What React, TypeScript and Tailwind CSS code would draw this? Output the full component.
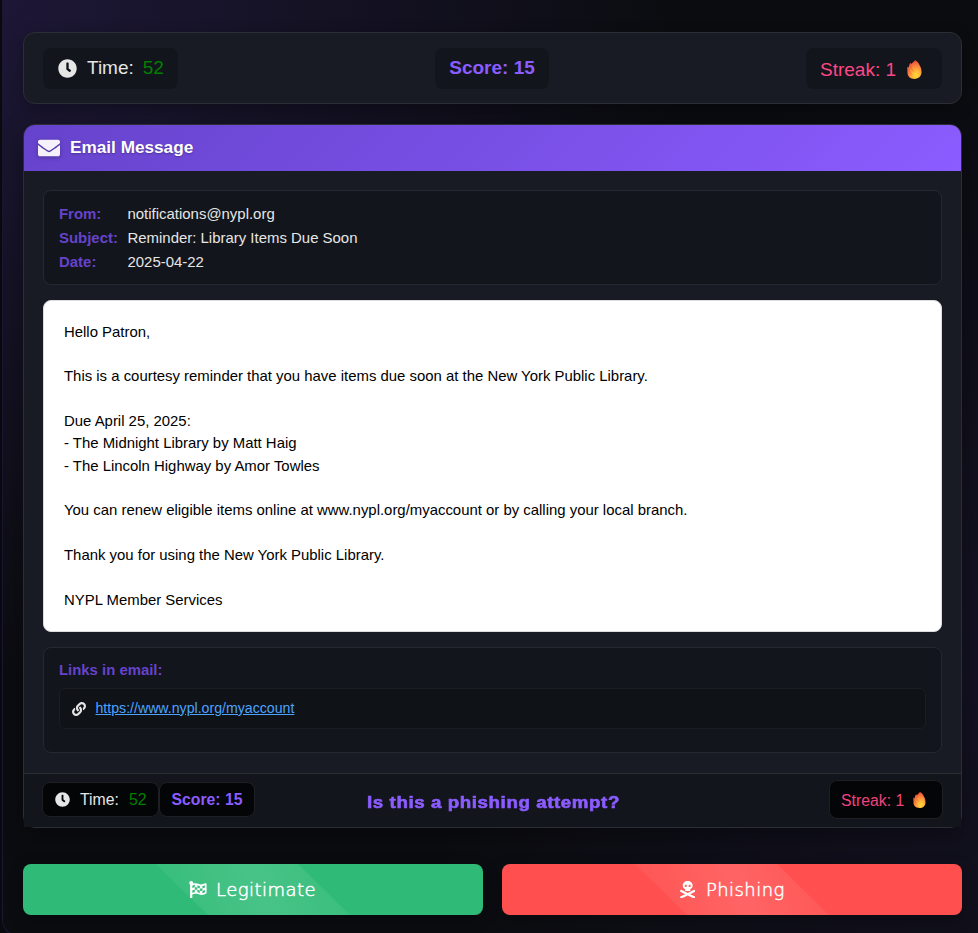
import type { ReactNode } from "react";
import { FaClock, FaEnvelope, FaFlagCheckered, FaLink, FaSkullCrossbones } from "react-icons/fa";

function Flame({ className }: { className: string }) {
  return (
    <svg viewBox="0 0 32 40" className={className}>
      <defs>
        <radialGradient id="flameFill" cx="0.62" cy="0.82" r="0.85">
          <stop offset="0" stopColor="#ffd836" />
          <stop offset="0.3" stopColor="#ffb83a" />
          <stop offset="0.65" stopColor="#fb7d3c" />
          <stop offset="1" stopColor="#ea3f3c" />
        </radialGradient>
      </defs>
      <path
        d="M17 0c5 2 8 6 10 11 3 5 4 10 4 15 0 8-6 14-15 14S1 35 1 27c0-5-1-9 0-13 1 0 2 1 3 2 0-4 1-7 3-10 1 0 2 1 3 2 2-4 5-5 7-8z"
        fill="url(#flameFill)"
      />
      <path d="M4 17c0 7 3 11 6 14M8 10c0 8 4 12 7 15" fill="none" stroke="#c94a2c" strokeOpacity=".5" strokeWidth="1.5" />
    </svg>
  );
}

function Meta({ label, children }: { label: string; children: ReactNode }) {
  return (
    <div className="flex h-6 items-center text-[14.95px] leading-6">
      <span className="w-[68.5px] font-bold text-[#6643cc]">{label}</span>
      <span className="text-[#e6e6e6]">{children}</span>
    </div>
  );
}

function Answer({ className, icon, children }: { className: string; icon: ReactNode; children: ReactNode }) {
  return (
    <button
      className={`relative flex h-[51px] flex-1 items-center overflow-hidden rounded-lg pl-[166px] text-white shadow-[0_4px_15px_rgba(0,0,0,0.3)] ${className}`}
    >
      <svg className="absolute inset-0 h-full w-full" viewBox="0 0 460 51" preserveAspectRatio="none">
        <defs>
          <linearGradient id="sheen" gradientUnits="userSpaceOnUse" x1="155" y1="60" x2="320" y2="-10">
            <stop offset="0" stopColor="#fff" stopOpacity=".04" />
            <stop offset=".5" stopColor="#fff" stopOpacity=".12" />
            <stop offset="1" stopColor="#fff" stopOpacity=".04" />
          </linearGradient>
        </defs>
        <path d="M133 0H275L327 51H185Z" fill="url(#sheen)" />
      </svg>
      {icon}
      <span className="relative font-['DejaVu_Sans',sans-serif] text-[18px] leading-6 font-extralight tracking-[0.45px] [-webkit-text-stroke:0.5px_white]">{children}</span>
    </button>
  );
}

const body = `Hello Patron,

This is a courtesy reminder that you have items due soon at the New York Public Library.

Due April 25, 2025:
- The Midnight Library by Matt Haig
- The Lincoln Highway by Amor Towles

You can renew eligible items online at www.nypl.org/myaccount or by calling your local branch.

Thank you for using the New York Public Library.

NYPL Member Services`;

export default function App() {
  return (
    <div className="h-[933px] w-[978px] overflow-hidden bg-[#0a0a0e] pl-[2px] font-['Liberation_Sans',Arial,sans-serif] text-[#e6e6e6]">
      <div className="h-[936px] w-[990px] rounded-b-[16px] border-b border-l border-[#1c1635] bg-[#0b0c10] bg-[radial-gradient(circle_at_0%_0%,rgba(102,67,204,0.2),transparent_50%),radial-gradient(circle_at_100%_70%,rgba(102,67,204,0.1),transparent_50%)] pt-8 pl-5">
        <div className="w-[939px]">
          <header className="flex h-[72px] items-center justify-between rounded-xl border border-[#2c2e35] bg-[#181b23] px-[19px] text-[19px] leading-[29px] shadow-[0_4px_15px_rgba(0,0,0,0.3)]">
            <div className="flex h-[41px] w-[135px] items-center rounded-lg bg-[#12151b] pl-[15px]">
              <FaClock className="size-[19px]" />
              <span className="ml-[10px] pb-[2px]">Time:</span>
              <span className="ml-[9px] pb-[2px] text-[#008000]">52</span>
            </div>
            <div className="flex h-[41px] w-[114px] items-center justify-center rounded-lg bg-[#12151b] pb-[2px] font-bold text-[#8b5cff]">Score: 15</div>
            <div className="flex h-[41px] w-[136px] items-center rounded-lg bg-[#12151b] pl-[14px] text-[#ff4785]">
              <span className="pt-[2px]">Streak: 1</span>
              <Flame className="mt-[2px] ml-[11px] h-[19px] w-[15px]" />
            </div>
          </header>

          <main className="mt-5 h-[704px] rounded-xl border border-[#2c2e35] bg-[#181b23] shadow-[0_8px_25px_rgba(0,0,0,0.35)]">
            <div className="flex h-[46px] items-center rounded-t-[11px] bg-[linear-gradient(135deg,#6643cc,#8b5cff)] pl-[14px] text-white">
              <FaEnvelope className="size-[22px] text-[#f4f1fc] drop-shadow-[0_1px_2px_rgba(0,0,0,0.3)]" />
              <h1 className="ml-[10px] text-[17.2px] font-bold [text-shadow:0_1px_2px_rgba(0,0,0,0.3)]">Email Message</h1>
            </div>
            <div className="h-[602px] px-[19px] pt-[19px]">
              <section className="h-[95px] rounded-lg border border-[#25282f] bg-[#12151b] px-[15px] pt-[11px]">
                <Meta label="From:">notifications@nypl.org</Meta>
                <Meta label="Subject:">Reminder: Library Items Due Soon</Meta>
                <Meta label="Date:">2025-04-22</Meta>
              </section>
              <section className="mt-[15px] h-[332px] rounded-lg border border-[#dcdcde] bg-white px-5 pt-[19.7px] text-[14.92px] leading-[22.35px] whitespace-pre-wrap text-black">
                {body}
              </section>
              <section className="mt-[15px] h-[106px] rounded-lg border border-[#25282f] bg-[#12151b] px-[15px] pt-[10px]">
                <h2 className="text-[14.9px] leading-6 font-bold text-[#6643cc]">Links in email:</h2>
                <div className="mt-[6px] flex h-[41px] items-center rounded-md border border-[#1b1d22] bg-[#0f1217] pl-3">
                  <FaLink className="size-[14px]" />
                  <a className="ml-[9.5px] text-[14.15px] text-[#4da3ff] underline" href="#myaccount">
                    https://www.nypl.org/myaccount
                  </a>
                </div>
              </section>
            </div>
            <footer className="flex h-[54px] items-center border-t border-[#2c2e35] bg-[#12151b] px-[18px] text-[15.8px]">
              <div className="mb-[2px] flex h-[35px] w-[117px] items-center rounded-lg border border-[#1d1f22] bg-[#040506] pl-3">
                <FaClock className="size-[15px]" />
                <span className="ml-[10px]">Time:</span>
                <span className="ml-[10px] text-[#008000]">52</span>
              </div>
              <div className="mb-[2px] flex h-[35px] w-[96px] items-center justify-center rounded-lg border border-[#1d1f22] bg-[#040506] font-bold text-[#8b5cff]">Score: 15</div>
              <p className="ml-[111.5px] origin-left scale-x-[1.17] pt-1 text-[16px] font-bold tracking-[0.5px] whitespace-nowrap text-[#8b5cff] [-webkit-text-stroke:0.6px_#8b5cff]">Is this a phishing attempt?</p>
              <div className="mb-[2px] ml-auto flex h-[39px] w-[114px] items-center rounded-lg border border-[#1d1f22] bg-[#040506] pl-[11px] text-[#f0437d]">
                <span className="pt-[2px]">Streak: 1</span>
                <Flame className="mt-px ml-[9px] h-4 w-[13px]" />
              </div>
            </footer>
          </main>

          <div className="mt-9 flex gap-[19px]">
            <Answer className="bg-[#2fbb77]" icon={<FaFlagCheckered className="relative mr-[9.5px] size-[17.6px]" />}>Legitimate</Answer>
            <Answer className="bg-[#ff4f4f]" icon={<FaSkullCrossbones className="relative mr-[11px] ml-[11.5px] h-[17.6px] w-[15.4px]" />}>Phishing</Answer>
          </div>
        </div>
      </div>
    </div>
  );
}
